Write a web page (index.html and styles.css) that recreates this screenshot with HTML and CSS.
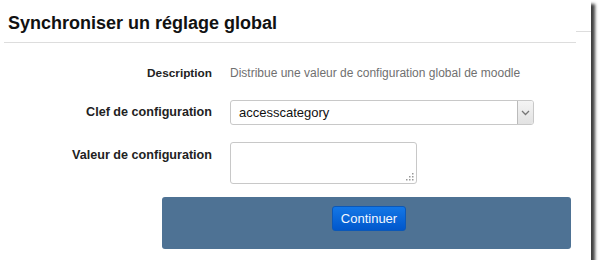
FILE: index.html
```html
<!DOCTYPE html>
<html lang="fr">
<head>
  <meta charset="UTF-8" />
  <title>Synchroniser un réglage global</title>
  <link rel="stylesheet" href="styles.css">
</head>
<body>
  <div class="frame">
    <div class="header">
      <h2 class="title">Synchroniser un réglage global</h2>
      <div class="tail"></div>
    </div>

    <div class="form">
      <div class="label small">Description</div>
      <div class="value desc">Distribue une valeur de configuration global de moodle</div>

      <div class="label mid">Clef de configuration</div>
      <div class="value">
        <div class="select">
          <span class="select-text">accesscategory</span>
          <span class="select-arrow">
            <svg width="9" height="6" viewBox="0 0 9 6"><path d="M1 1 L4.5 4.5 L8 1" fill="none" stroke="#777" stroke-width="1.3"/></svg>
          </span>
        </div>
      </div>

      <div class="label top">Valeur de configuration</div>
      <div class="value">
        <div class="area-wrap">
          <textarea class="area"></textarea>
          <!-- poignée de redimensionnement -->
          <svg class="grip" width="9" height="9" viewBox="0 0 9 9">
            <rect x="7" y="1" width="1.5" height="1.5" fill="#999"/>
            <rect x="4" y="4" width="1.5" height="1.5" fill="#999"/>
            <rect x="7" y="4" width="1.5" height="1.5" fill="#999"/>
            <rect x="1" y="7" width="1.5" height="1.5" fill="#999"/>
            <rect x="4" y="7" width="1.5" height="1.5" fill="#999"/>
            <rect x="7" y="7" width="1.5" height="1.5" fill="#999"/>
          </svg>
        </div>
      </div>
    </div>

    <div class="actions">
      <button class="btn">Continuer</button>
    </div>
  </div>
</body>
</html>
```

FILE: styles.css
```css
body {
  margin: 0;
  font-family: 'Liberation Sans', Arial, sans-serif;
  background: #fff;
  color: #222;
}
.frame {
  width: 591px;
  height: 260px;
  background: #fff;
  box-shadow: 4px 4px 3px rgba(0, 0, 0, 0.75);
  box-sizing: border-box;
}
/* titre */
.header {
  display: flex;
  align-items: flex-start;
  padding-left: 4px;
}
.title {
  flex: 1;
  margin: 0;
  height: 43px;
  box-sizing: border-box;
  padding: 13px 0 0 4px;
  font-size: 18px;
  font-weight: bold;
  color: #111;
  border-bottom: 1px solid #ddd;
}
.tail {
  width: 15px;
  height: 31px;
  border-bottom: 1px solid #ddd;
}
/* formulaire */
.form {
  display: grid;
  grid-template-columns: 212px 305px;
  column-gap: 18px;
  row-gap: 17px;
  padding-top: 20px;
}
.label {
  text-align: right;
  font-weight: bold;
  color: #222;
}
.label.small {
  font-size: 11.8px;
  line-height: 20px;
}
.label.mid {
  font-size: 12.6px;
  line-height: 25px;
}
.label.top {
  font-size: 12.6px;
  line-height: 16px;
  padding-top: 5px;
}
.value.desc {
  font-size: 12px;
  line-height: 20px;
  color: #707070;
}
.select {
  display: flex;
  height: 25px;
  width: 304px;
  box-sizing: border-box;
  border: 1px solid #c8c8c8;
  border-radius: 3px;
  background: #fff;
}
.select-text {
  flex: 1;
  padding-left: 8px;
  font-size: 13px;
  line-height: 23px;
  color: #111;
}
.select-arrow {
  width: 15px;
  display: flex;
  align-items: center;
  justify-content: center;
  border-left: 1px solid #bbb;
  background: linear-gradient(#f4f4f4, #e2e2e2);
  border-radius: 0 2px 2px 0;
}
.area-wrap {
  position: relative;
  width: 187px;
  height: 42px;
}
.area {
  display: block;
  width: 187px;
  height: 42px;
  box-sizing: border-box;
  border: 1px solid #c8c8c8;
  border-radius: 3px;
  margin: 0;
  resize: none;
  font-family: inherit;
}
.grip {
  position: absolute;
  right: 3px;
  bottom: 3px;
}
/* bouton */
.actions {
  margin: 13px 0 0 162px;
  width: 409px;
  height: 52px;
  box-sizing: border-box;
  padding: 9px 0 0 5px;
  display: flex;
  justify-content: center;
  align-items: flex-start;
  background: #4e7294;
  border-radius: 3px;
}
.btn {
  width: 74px;
  height: 25px;
  border: 1px solid #0b58b8;
  border-radius: 3px;
  background: linear-gradient(#1477e6, #0057cc);
  color: #f4f8ff;
  font-family: inherit;
  font-size: 13px;
  padding: 0;
}
```
